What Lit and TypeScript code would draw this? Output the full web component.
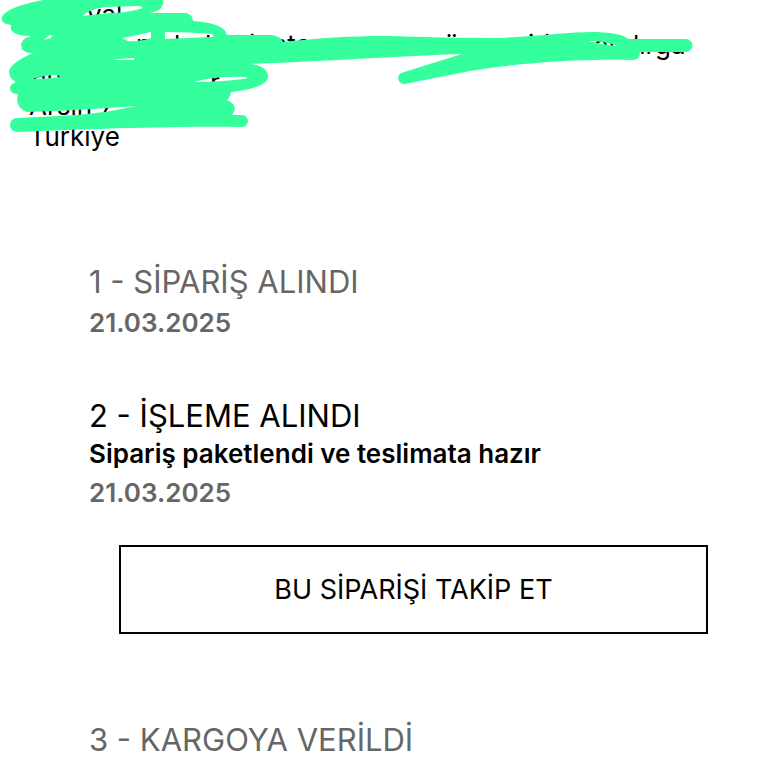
import { LitElement, html, css, svg } from "lit";
import { customElement } from "lit/decorators.js";

/* Pieces of the address that show between the marker strokes: x, baseline, text. */
const fragments: Array<[number, number, string]> = [
  [29, 25, "T"],
  [87, 24, "yal"],
  [136, 54, "n"],
  [174, 54, "l"],
  [205, 54, "l"],
  [249, 54, "i"],
  [272, 54, "nta"],
  [444, 54, "ü"],
  [528, 54, "i"],
  [544, 54, "i"],
  [594, 55, "an"],
  [633, 54, "lırga"],
  [32, 84, "an"],
  [210, 92, "r"],
  [29, 115, "Arsin 7"],
];

/* Outline of the scribble, then the gaps left inside it. */
const ink = [
  "M8 11 C20 4 35 2 52 -2 L163 -2 Q165 7 157 11 L150 13 L186 13 Q193 15 193 21 C208 22 225 25 227 35 L272 35 Q282 37 283 42 C320 38 350 36 385 36 C420 37 460 38 500 38 C540 36 570 32 592 32 C615 32 626 36 628 39 L686 39 A6 6 0 0 1 686 52 L640 52 Q640 60 632 60 C575 59 520 63 470 71 L405 84 A6 6 0 0 1 401 73 L462 54 C400 56 330 61 250 64 C264 65 269 72 268 78 C266 86 248 90 231 92 Q230 98 227 100 Q237 104 234 112 L232 115 L242 115 A6 6 0 0 1 242 127 C180 126 90 129 17 132 A7 7 0 0 1 17 118 C60 116 100 115 135 106 C100 109 60 111 27 112 Q17 109 17 98 L18 94 Q10 94 10 88 Q10 84 16 82 Q9 79 9 71 Q12 62 33 53 Q22 54 21 45 Q22 38 31 36 Q15 36 11 30 L11 25 Q0 24 2 17 Q3 14 8 11 Z",
  "M82 16 Q90 9 106 7 L140 6 Q144 8 140 9 Q125 13 110 13 Z",
  "M122 38 Q138 35 151 32 L151 38 Q138 42 128 41 Z",
  "M165 32 Q190 32 212 34 Q215 36 212 37 L165 39 Z",
  "M44 40 Q48 35 52 35 L51 38 Z",
  "M32 79 Q45 75 58 75 L60 77 Q46 79 32 79 Z",
  "M193 82 Q215 76 246 77 Q249 78 244 79 Q220 82 193 82 Z",
  "M112 60 Q124 58 134 58 L134 60 Z",
  "M588 41 Q604 41 618 46 Q604 45 588 41 Z",
].join(" ");

@customElement("app-root")
export class AppRoot extends LitElement {
  static styles = css`
    :host {
      display: block;
      position: relative;
      background: #fff;
      color: #000;
      font-family: Inter, "Liberation Sans", sans-serif;
    }
    .address {
      padding: 121px 29px 0;
      font-size: 26px;
      line-height: 32px;
      font-style: normal;
    }
    .scribble {
      position: absolute;
      top: 0;
      left: 0;
      font-size: 26px;
    }
    .ink {
      fill: #35ff9c;
      fill-rule: evenodd;
    }
    .steps {
      list-style: none;
      margin: 0;
      padding: 109px 60px 0 89px;
    }
    .step {
      margin-bottom: 50px;
      color: #666;
    }
    .step:last-child {
      margin-bottom: 0;
    }
    h2 {
      margin: 0;
      font-size: 31px;
      line-height: 40px;
      font-weight: 400;
    }
    .active h2,
    strong {
      color: #000;
    }
    strong,
    time {
      display: block;
      font-size: 26px;
      font-weight: 600;
    }
    strong {
      line-height: 36px;
    }
    time {
      line-height: 42px;
    }
    .active {
      margin-top: 52px;
    }
    button {
      display: block;
      width: calc(100% - 30px);
      height: 89px;
      margin: 31px 0 86px 30px;
      padding: 0;
      border: 2px solid #000;
      background: #fff;
      color: #000;
      font: inherit;
      font-size: 27px;
    }
  `;

  render() {
    return html`
      <address class="address">Türkiye</address>
      <svg class="scribble" width="768" height="150" viewBox="0 0 768 150">
        ${fragments.map(([x, y, t]) => svg`<text x=${x} y=${y}>${t}</text>`)}
        <path class="ink" d=${ink} />
      </svg>
      <ol class="steps">
        <li class="step">
          <h2>1 - SİPARİŞ ALINDI</h2>
          <time datetime="2025-03-21">21.03.2025</time>
        </li>
        <li class="step active">
          <h2>2 - İŞLEME ALINDI</h2>
          <strong>Sipariş paketlendi ve teslimata hazır</strong>
          <time datetime="2025-03-21">21.03.2025</time>
          <button type="button">BU SİPARİŞİ TAKİP ET</button>
        </li>
        <li class="step">
          <h2>3 - KARGOYA VERİLDİ</h2>
        </li>
      </ol>
    `;
  }
}
